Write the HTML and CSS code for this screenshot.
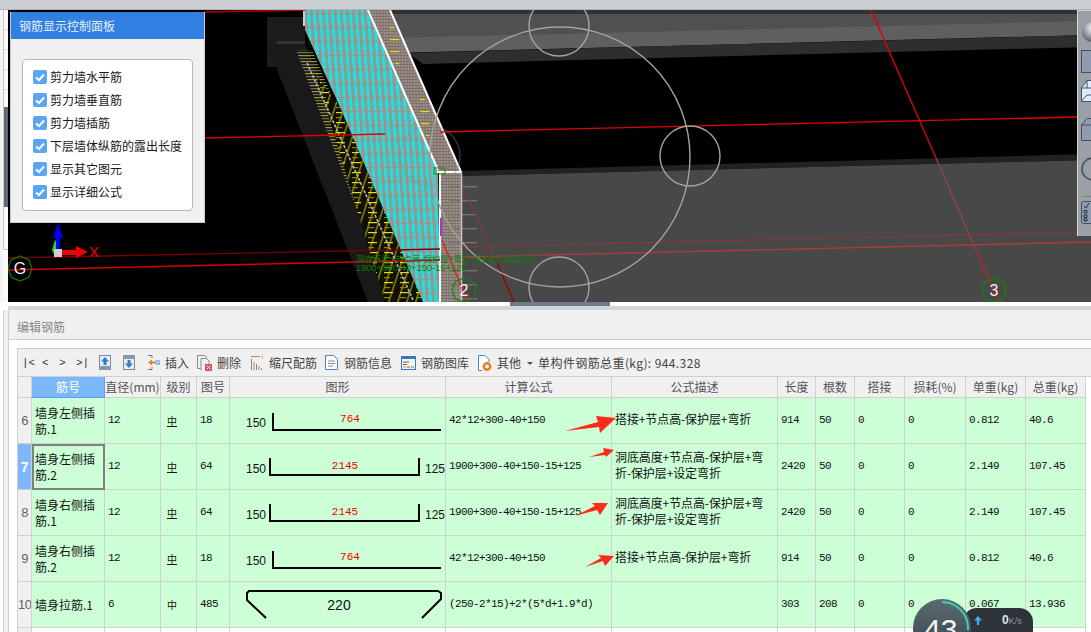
FILE: index.html
```html
<!DOCTYPE html>
<html lang="zh-CN">
<head>
<meta charset="utf-8">
<title>钢筋显示控制面板</title>
<link rel="stylesheet" href="styles.css">
</head>
<body>
<div class="app">
  <div class="topbar"></div>

  <div class="work">
    <div class="gutter">
      <div class="gutter-rows"><i></i><i></i><i></i><i></i></div>
      <div class="gutter-handle"></div>
    </div>

    <div class="viewport">
      <svg class="scene" viewBox="8 10 1083 292" width="1083" height="292">
        <defs>
          <pattern id="cyanwall" width="6" height="14" patternUnits="userSpaceOnUse" patternTransform="skewX(4)">
            <rect width="6" height="14" fill="#a09088"/>
            <rect x="0" width="3" height="13" fill="#22e0e0"/>
            <rect x="4.400" y="2" width="1" height="6" fill="#45c4c4"/>
          </pattern>
          <pattern id="brown" width="3" height="3" patternUnits="userSpaceOnUse">
            <rect width="3" height="3" fill="#8d8079"/>
            <rect x="0" width="1" height="3" fill="#a0938b"/>
            <rect y="1" width="3" height="1" fill="#7b706a"/>
          </pattern>
          <pattern id="ticks" width="24" height="6" patternUnits="userSpaceOnUse">
            <rect y="1" width="24" height="1.200" fill="#a59a1e"/>
            <rect y="4" width="24" height="1.200" fill="#6f6f64"/>
          </pattern>
          <pattern id="yticks" width="16" height="10" patternUnits="userSpaceOnUse">
            <rect y="2" width="9" height="1.200" fill="#e8de00"/>
            <rect y="7" width="6" height="1.200" fill="#8f8800"/>
          </pattern>
          <pattern id="sparse" width="30" height="12" patternUnits="userSpaceOnUse">
            <rect y="3" width="9" height="1.200" fill="#e8de00"/>
          </pattern>
          <pattern id="olive" width="9" height="20" patternUnits="userSpaceOnUse" patternTransform="skewX(-18)">
            <rect width="1.600" height="20" fill="#8a8200"/>
          </pattern>
          <pattern id="greyticks" width="15" height="14" patternUnits="userSpaceOnUse">
            <rect y="4" width="15" height="1.400" fill="#77726e"/>
          </pattern>
        </defs>

        <rect x="8" y="10" width="1083" height="292" fill="#000"/>

        <polygon points="390,10 1091,10 1091,20 390,14" fill="#333"/>
        <polygon points="390,14 1091,14 1091,25 390,39" fill="#505050"/>
        <polygon points="390,38 1091,21 1091,35 390,53" fill="#5f5f5f"/>
        <polygon points="408,53 1091,35 1091,47 423,64" fill="#2e2e2e"/>
        <polygon points="462,171 1091,154 1091,160 462,176" fill="#222"/>
        <polygon points="462,176 1091,160 1091,302 462,302" fill="#484848"/>

        <rect x="267" y="17" width="38" height="50" fill="#1c1c1c"/>
        <rect x="277" y="41" width="28" height="26" fill="#333"/>
        <polygon points="267,44 305,44 423,302 368,302" fill="#191919"/>
        <polygon points="296,50 312,50 420,302 392,302" fill="url(#ticks)"/>

        <polygon points="316,75 340,107 423,302 385,302" fill="#101006"/>
        <polygon points="316,75 340,107 423,302 385,302" fill="url(#olive)"/>
        <polygon points="316,75 340,107 423,302 385,302" fill="url(#yticks)"/>
        <line x1="307" y1="63" x2="413" y2="300" stroke="#b8b4ae" stroke-width="1.600" stroke-dasharray="3 1.500"/>

        <polygon points="305,10 368,10 438,170 440,302 423,302 340,107 305,30" fill="url(#cyanwall)"/>
        <polygon points="368,10 390,10 460,172 438,172" fill="url(#brown)"/>
        <polygon points="376,18 390,18 446,150 432,150" fill="url(#sparse)"/>
        <rect x="440" y="172" width="22" height="130" fill="url(#brown)"/>
        <rect x="450" y="176" width="27" height="126" fill="url(#greyticks)"/>

        <line x1="304" y1="10" x2="304" y2="26" stroke="#fff" stroke-width="1.600"/>
        <line x1="368" y1="10" x2="438" y2="170" stroke="#fff" stroke-width="2"/>
        <line x1="390" y1="10" x2="461" y2="172" stroke="#fff" stroke-width="2"/>
        <line x1="437" y1="172" x2="462" y2="172" stroke="#fff" stroke-width="2"/>
        <line x1="440" y1="172" x2="440" y2="302" stroke="#e8ffff" stroke-width="2"/>
        <line x1="461.500" y1="172" x2="461.500" y2="302" stroke="#c9c6c2" stroke-width="1.500"/>

        <g fill="none" stroke-width="1.400">
          <line x1="205" y1="12" x2="305" y2="10" stroke="#b00000"/>
          <line x1="205" y1="138" x2="385" y2="134" stroke="#e00000"/>
          <line x1="440" y1="132" x2="1077" y2="117" stroke="#e60000"/>
          <line x1="8" y1="258" x2="440" y2="249" stroke="#7a0000"/>
          <line x1="8" y1="270" x2="440" y2="260" stroke="#d80000"/>
          <line x1="462" y1="247" x2="1091" y2="232" stroke="#7c3c3c"/>
          <line x1="462" y1="257" x2="1091" y2="242" stroke="#b03a3a"/>
          <line x1="871" y1="10" x2="936" y2="158" stroke="#e00000"/>
          <line x1="936" y1="158" x2="976" y2="250" stroke="#8a4545"/>
          <line x1="976" y1="250" x2="999" y2="302" stroke="#c82020"/>
          <line x1="463" y1="187" x2="495" y2="258" stroke="#7c3c3c"/>
          <line x1="495" y1="258" x2="514" y2="302" stroke="#a00000"/>
          <line x1="442" y1="240" x2="468" y2="302" stroke="#e02020"/>
        </g>

        <g fill="none" stroke="#a3a3a3" stroke-width="1.400">
          <circle cx="560" cy="157" r="130"/>
          <circle cx="559" cy="26" r="30"/>
          <circle cx="559" cy="287" r="30"/>
          <circle cx="690" cy="156" r="30"/>
          <circle cx="430" cy="156" r="30" stroke="#8d8986" stroke-opacity="0.400"/>
        </g>

        <rect x="440" y="218" width="2" height="18" fill="#b030c0"/>

        <text class="scene-cad" x="356" y="262">洞底高度+节点高-保护层+弯折-保护层+设定弯折</text>
        <text class="scene-cad-num" x="356" y="271">1900+300-40+150-15+125</text>
        <rect x="434" y="168" width="11" height="6" fill="none" stroke="#1a8a1a"/>

        <polygon points="20,256 29,260 32,268 29,277 20,281 11,277 8,268 11,260" fill="none" stroke="#0a7a0a" stroke-width="1.200"/>
        <polygon points="464,278 473,282 476,290 473,299 464,302 455,299 452,290 455,282" fill="none" stroke="#0a8a0a" stroke-width="1.200"/>
        <polygon points="994,278 1003,282 1006,290 1003,299 994,302 985,299 982,290 985,282" fill="none" stroke="#0a8a0a" stroke-width="1.200"/>
        <text class="scene-mark" x="20" y="274">G</text>
        <text class="scene-mark" x="464" y="296">2</text>
        <text class="scene-mark" x="994" y="296">3</text>

        <polygon points="52,250 55,240 59,244 60,254 54,254" fill="#18e018"/>
        <rect x="56" y="234" width="4" height="16" fill="#0000f0"/>
        <polygon points="58,223 63,238 53,238" fill="#0000f0"/>
        <rect x="62" y="250" width="16" height="5" fill="#f00000"/>
        <polygon points="88,252 76,246 76,258" fill="#f00000"/>
        <rect x="54" y="249" width="8" height="8" fill="#d0d0d0"/>
        <text class="scene-x" x="89" y="257">X</text>
      </svg>

      <section class="rebar-panel">
        <h2 class="rebar-title">钢筋显示控制面板</h2>
        <div class="rebar-body">
          <ul class="rebar-options">
            <li><span class="check"><svg viewBox="0 0 14 14" width="14" height="14"><path d="M3 7.500 6 10 11 4.500" fill="none" stroke="#fff" stroke-width="2"/></svg></span>剪力墙水平筋</li>
            <li><span class="check"><svg viewBox="0 0 14 14" width="14" height="14"><path d="M3 7.500 6 10 11 4.500" fill="none" stroke="#fff" stroke-width="2"/></svg></span>剪力墙垂直筋</li>
            <li><span class="check"><svg viewBox="0 0 14 14" width="14" height="14"><path d="M3 7.500 6 10 11 4.500" fill="none" stroke="#fff" stroke-width="2"/></svg></span>剪力墙插筋</li>
            <li><span class="check"><svg viewBox="0 0 14 14" width="14" height="14"><path d="M3 7.500 6 10 11 4.500" fill="none" stroke="#fff" stroke-width="2"/></svg></span>下层墙体纵筋的露出长度</li>
            <li><span class="check"><svg viewBox="0 0 14 14" width="14" height="14"><path d="M3 7.500 6 10 11 4.500" fill="none" stroke="#fff" stroke-width="2"/></svg></span>显示其它图元</li>
            <li><span class="check"><svg viewBox="0 0 14 14" width="14" height="14"><path d="M3 7.500 6 10 11 4.500" fill="none" stroke="#fff" stroke-width="2"/></svg></span>显示详细公式</li>
          </ul>
        </div>
      </section>

      <aside class="view-tools">
        <svg viewBox="1077 10 14 226" width="14" height="226">
          <defs>
            <radialGradient id="ball" cx="0.550" cy="0.300" r="0.700"><stop offset="0" stop-color="#fff"/><stop offset="1" stop-color="#59626e"/></radialGradient>
          </defs>
          <circle cx="1092" cy="32" r="10" fill="url(#ball)"/>
          <rect x="1081.500" y="50.500" width="20" height="22" fill="#8e9bb0" stroke="#46505f"/>
          <path d="M1081.500 88 1087 80.500H1100V101.500H1081.500Z" fill="#dcecff" stroke="#46505f"/>
          <path d="M1081.500 88H1100M1087 80.500V88M1081.500 101 1087 95H1100" fill="none" stroke="#46505f"/>
          <path d="M1081.500 125 1087 118.500H1100V140.500H1081.500Z" fill="#8e9bb0" stroke="#46505f"/>
          <path d="M1081.500 125H1100" stroke="#46505f" fill="none"/>
          <circle cx="1093" cy="169" r="11" fill="none" stroke="#46505f" stroke-width="1.600"/>
          <line x1="1082" y1="196.500" x2="1091" y2="196.500" stroke="#7c7f84"/>
          <rect x="1081.500" y="201.500" width="20" height="22" rx="2" fill="#8e9bb0" stroke="#46505f"/>
          <path d="M1084 206 1086 208 1089 203M1084 210.500H1087V213H1084ZM1084 215H1087V217.500H1084ZM1084 219H1087V221H1084Z" fill="none" stroke="#2b3340"/>
        </svg>
      </aside>
    </div>
  </div>

  <div class="splitter"><span class="splitter-handle"></span></div>
  <div class="splitter-bar"></div>

  <div class="editor">
    <div class="editor-rail"></div>
    <div class="editor-main">
      <h3 class="editor-title">编辑钢筋</h3>
      <div class="editor-body">
        <div class="grid-wrap">
          <div class="toolbar">
            <div class="nav"><span>|&lt;</span><span>&lt;</span><span>&gt;</span><span>&gt;|</span></div>
            <div class="moves">
              <svg viewBox="0 0 12 15" width="12" height="15"><rect x="0.500" y="0.500" width="11" height="14" fill="#e8eef5" stroke="#7d8894"/><rect y="11" width="12" height="4" fill="#8a97a5"/><path d="M6 2 10 6.500H7.500V10h-3V6.500H2Z" fill="#2f7fd0"/></svg>
              <svg viewBox="0 0 12 15" width="12" height="15"><rect x="0.500" y="0.500" width="11" height="14" fill="#e8eef5" stroke="#7d8894"/><rect width="12" height="4" fill="#8a97a5"/><path d="M6 13 10 8.500H7.500V5h-3V8.500H2Z" fill="#2f7fd0"/></svg>
            </div>
            <div class="tool tool-insert"><svg viewBox="0 0 13 15" width="13" height="15"><path d="M1 .5H5M5 .5V3M1 14.500H5M5 14.500V12" fill="none" stroke="#777"/><path d="M1 7.500 5 4.500V6.500H8V8.500H5V10.500Z" fill="#f07a1c"/><rect x="9" y="6" width="4" height="3" fill="none" stroke="#3f8fd8"/></svg>插入</div>
            <div class="tool tool-delete"><svg viewBox="0 0 15 16" width="15" height="16"><path d="M3.500 13.500H.5V.5H8L10 3M4 15.500V3.500H9.500L12 6V9" fill="none" stroke="#8c8c8c"/><rect x="8" y="9" width="7" height="7" fill="#d85050"/><path d="M9.500 10.500 13.500 14.500M13.500 10.500 9.500 14.500" stroke="#fff"/></svg>删除</div>
            <div class="tool tool-scale"><svg viewBox="0 0 12 15" width="12" height="15"><path d="M0 1.500H9" stroke="#e07a30"/><path d="M12 0V4" stroke="#e07a30"/><path d="M.5 4V15M3 7V15M5.500 9V15M8 11V15M10.500 13V15" stroke="#8a8a8a"/></svg>缩尺配筋</div>
            <div class="tool tool-info"><svg viewBox="0 0 13 15" width="13" height="15"><path d="M.5.500H8.500L12.500 4.500V14.500H.5Z" fill="#fff" stroke="#3f86d6"/><path d="M3 6H10M3 8.500H10M3 11H8" stroke="#8a8a8a"/></svg>钢筋信息</div>
            <div class="tool tool-lib"><svg viewBox="0 0 15 14" width="15" height="14"><rect x="0.500" y="0.500" width="14" height="13" fill="#f4f4f4" stroke="#3a77c0"/><rect width="15" height="3" fill="#3a77c0"/><path d="M2 6H8M2 8.500H6" stroke="#666"/><path d="M2 11H5" stroke="#d8a030"/><path d="M6 11H9" stroke="#c04040"/><path d="M10 11H13" stroke="#40a060"/></svg>钢筋图库</div>
            <div class="tool tool-other"><svg viewBox="0 0 14 16" width="14" height="16"><path d="M4 15.500H.5V.5H7L11 4.500V7" fill="#fff" stroke="#3f86d6"/><circle cx="9" cy="11.500" r="3.200" fill="none" stroke="#ee7a1c" stroke-width="2.400"/></svg>其他</div>
            <span class="caret"></span>
            <div class="total">单构件钢筋总重(kg): 944.328</div>
          </div>

          <table class="rebar-grid">
            <colgroup>
              <col class="c0"><col class="c1"><col class="c2"><col class="c3"><col class="c4"><col class="c5"><col class="c6"><col class="c7"><col class="c8"><col class="c9"><col class="c10"><col class="c11"><col class="c12"><col class="c13">
            </colgroup>
            <thead>
              <tr>
                <th></th><th class="is-active">筋号</th><th>直径(mm)</th><th>级别</th><th>图号</th><th>图形</th><th>计算公式</th><th>公式描述</th><th>长度</th><th>根数</th><th>搭接</th><th>损耗(%)</th><th>单重(kg)</th><th>总重(kg)</th>
              </tr>
            </thead>
            <tbody>
              <tr>
                <th class="rownum">6</th>
                <td class="name">墙身左侧插<br>筋.1</td><td class="num">12</td><td><span class="grade grade-b">中</span></td><td class="num">18</td>
                <td class="shape"><svg viewBox="0 0 215 45" width="215" height="45"><text class="dim" x="16" y="29">150</text><text class="len" x="120" y="24">764</text><path d="M43 15V32H211" fill="none" stroke="#000" stroke-width="2"/></svg></td>
                <td class="num">42*12+300-40+150</td><td class="desc">搭接+节点高-保护层+弯折</td><td class="num">914</td><td class="num">50</td><td class="num">0</td><td class="num">0</td><td class="num">0.812</td><td class="num">40.6</td>
              </tr>
              <tr>
                <th class="rownum is-current">7</th>
                <td class="name is-selected">墙身左侧插<br>筋.2</td><td class="num">12</td><td><span class="grade grade-b">中</span></td><td class="num">64</td>
                <td class="shape"><svg viewBox="0 0 215 45" width="215" height="45"><text class="dim" x="16" y="29">150</text><text class="len" x="115" y="25">2145</text><text class="dim" x="195" y="29">125</text><path d="M40 14V31H189V14" fill="none" stroke="#000" stroke-width="2"/></svg></td>
                <td class="num">1900+300-40+150-15+125</td><td class="desc">洞底高度+节点高-保护层+弯<br>折-保护层+设定弯折</td><td class="num">2420</td><td class="num">50</td><td class="num">0</td><td class="num">0</td><td class="num">2.149</td><td class="num">107.45</td>
              </tr>
              <tr>
                <th class="rownum">8</th>
                <td class="name">墙身右侧插<br>筋.1</td><td class="num">12</td><td><span class="grade grade-b">中</span></td><td class="num">64</td>
                <td class="shape"><svg viewBox="0 0 215 45" width="215" height="45"><text class="dim" x="16" y="29">150</text><text class="len" x="115" y="25">2145</text><text class="dim" x="195" y="29">125</text><path d="M40 14V31H189V14" fill="none" stroke="#000" stroke-width="2"/></svg></td>
                <td class="num">1900+300-40+150-15+125</td><td class="desc">洞底高度+节点高-保护层+弯<br>折-保护层+设定弯折</td><td class="num">2420</td><td class="num">50</td><td class="num">0</td><td class="num">0</td><td class="num">2.149</td><td class="num">107.45</td>
              </tr>
              <tr>
                <th class="rownum">9</th>
                <td class="name">墙身右侧插<br>筋.2</td><td class="num">12</td><td><span class="grade grade-b">中</span></td><td class="num">18</td>
                <td class="shape"><svg viewBox="0 0 215 45" width="215" height="45"><text class="dim" x="16" y="29">150</text><text class="len" x="120" y="24">764</text><path d="M43 15V32H211" fill="none" stroke="#000" stroke-width="2"/></svg></td>
                <td class="num">42*12+300-40+150</td><td class="desc">搭接+节点高-保护层+弯折</td><td class="num">914</td><td class="num">50</td><td class="num">0</td><td class="num">0</td><td class="num">0.812</td><td class="num">40.6</td>
              </tr>
              <tr>
                <th class="rownum">10</th>
                <td class="name">墙身拉筋.1</td><td class="num">6</td><td><span class="grade">中</span></td><td class="num">485</td>
                <td class="shape"><svg viewBox="0 0 215 45" width="215" height="45"><text class="dim dim-lg" x="109" y="28">220</text><path d="M36 36 17 18V11L19 9H208L211 11V17L192 36" fill="none" stroke="#000" stroke-width="2"/></svg></td>
                <td class="num">(250-2*15)+2*(5*d+1.9*d)</td><td class="desc"></td><td class="num">303</td><td class="num">208</td><td class="num">0</td><td class="num">0</td><td class="num">0.067</td><td class="num">13.936</td>
              </tr>
              <tr class="blank">
                <th></th><td></td><td></td><td></td><td></td><td></td><td></td><td></td><td></td><td></td><td></td><td></td><td></td><td></td>
              </tr>
            </tbody>
          </table>
        </div>
      </div>
    </div>
  </div>

  <svg class="annotations" viewBox="0 0 1091 632" width="1091" height="632">
    <polygon points="565,431 598,422 596,416 616,418 600,433 599,427" fill="#ff2a18"/>
    <polygon points="589,457 604,452 603,448 614,450 606,457 605,455" fill="#ff2a18"/>
    <polygon points="575,516 595,506 592,503 608,503 600,515 597,510" fill="#ff2a18"/>
    <polygon points="585,567 601,558 598,555 614,556 605,566 603,561" fill="#ff2a18"/>
  </svg>

  <div class="net-meter">
    <div class="net-pill">
      <svg class="net-arrow" viewBox="0 0 8 9" width="8" height="9"><path d="M4 0 8 4.500H5.200V9H2.800V4.500H0Z" fill="#3ab0f0"/></svg>
      <span class="net-speed"><b>0</b>K/s</span>
    </div>
    <div class="net-dial">
      <svg class="net-ring" viewBox="0 0 58 58" width="58" height="58"><path d="M29 3A26 26 0 0 1 55 29V31" fill="none" stroke="#37d4b8" stroke-width="2"/></svg>
      <span class="net-value">43<small>%</small></span>
    </div>
  </div>
</div>
</body>
</html>
```

FILE: styles.css
```css
* { box-sizing: border-box; }

html, body {
  margin: 0;
  padding: 0;
  height: 100%;
  overflow: hidden;
  background: #fff;
}

.app {
  position: relative;
  width: 1091px;
  height: 632px;
  overflow: hidden;
  display: flex;
  flex-direction: column;
  font-family: "Noto Sans CJK SC", "Liberation Sans", sans-serif;
  font-size: 12px;
  color: #111;
}

.topbar {
  height: 10px;
  flex: none;
  background: #ccd0d4;
  border-bottom: 1px solid #aeb1b5;
}

.work {
  display: flex;
  height: 292px;
  flex: none;
}

.gutter {
  position: relative;
  width: 8px;
  flex: none;
  background: #fbfbfb;
  border-left: 3px solid #f4f4f4;
}

.gutter-rows {
  height: 240px;
  border-left: 1px solid #c9c9c9;
  border-bottom: 1px solid #c9c9c9;
  display: flex;
  flex-direction: column;
}

.gutter-rows i {
  display: block;
  height: 20px;
  flex: none;
  border-bottom: 1px solid #dadada;
}

.gutter-handle {
  position: absolute;
  left: 1px;
  top: 97px;
  width: 4px;
  height: 100px;
  background: #5f6b78;
}

.viewport {
  position: relative;
  flex: 1;
  background: #000;
  overflow: hidden;
}

.scene {
  display: block;
}

.scene-cad {
  font-family: "Noto Sans CJK SC", sans-serif;
  font-size: 8.500px;
  fill: #0b7d0b;
}

.scene-cad-num {
  font-family: "Liberation Sans", sans-serif;
  font-size: 9.300px;
  fill: #0b7d0b;
}

.scene-mark {
  font-family: "Liberation Sans", sans-serif;
  font-size: 16px;
  fill: #eee;
  text-anchor: middle;
}

.scene-x {
  font-family: "Liberation Sans", sans-serif;
  font-size: 15px;
  fill: #f00000;
}

.rebar-panel {
  position: absolute;
  left: 2px;
  top: 2px;
  width: 195px;
  height: 211px;
  background: #f0f0f0;
  border: 1px solid #c9ccd4;
  border-top: 0;
  display: flex;
  flex-direction: column;
}

.rebar-title {
  margin: 0;
  height: 27px;
  flex: none;
  padding-left: 8px;
  background: #2f80e0;
  color: #e6eefa;
  font-size: 12px;
  font-weight: 400;
  line-height: 27px;
}

.rebar-body {
  flex: 1;
  padding: 20px 11px 11px 11px;
  display: flex;
}

.rebar-options {
  flex: 1;
  height: 152px;
  margin: 0;
  padding: 0 0 2px 10px;
  list-style: none;
  background: #fff;
  border: 1px solid #b8b8b8;
  border-radius: 4px;
  display: flex;
  flex-direction: column;
  justify-content: center;
}

.rebar-options li {
  display: flex;
  align-items: center;
  gap: 3px;
  height: 23px;
  white-space: nowrap;
  color: #1a1a1a;
}

.check {
  width: 14px;
  height: 14px;
  flex: none;
  border-radius: 2px;
  background: #5ba5f5;
}

.check svg {
  display: block;
}

.view-tools {
  position: absolute;
  right: 0;
  top: 0;
  width: 14px;
  height: 226px;
  background: #9ba0a6;
  border-top: 1px solid #cfd2d5;
  border-left: 1px solid #d6d8da;
  overflow: hidden;
}

.view-tools svg {
  display: block;
  margin: -1px 0 0 -1px;
}

.splitter {
  height: 4px;
  flex: none;
  background: #fff;
  display: flex;
  justify-content: center;
  padding-left: 29px;
}

.splitter-handle {
  width: 100px;
  height: 4px;
  background: #6d7a8a;
}

.splitter-bar {
  height: 4px;
  flex: none;
  margin-left: 8px;
  background: #d3d5da;
}

.editor {
  flex: 1;
  display: flex;
  min-height: 0;
}

.editor-rail {
  width: 9px;
  flex: none;
  background: #f0f0f0;
  border-left: 3px solid #fff;
  box-shadow: inset 1px 0 #d0d0d0;
}

.editor-main {
  flex: 1;
  min-width: 0;
  display: flex;
  flex-direction: column;
  border-left: 1px solid #cfcfcf;
  margin-left: -1px;
}

.editor-title {
  margin: 0;
  height: 30px;
  flex: none;
  padding-left: 8px;
  background: #f0f0f0;
  border-bottom: 1px solid #cfcfcf;
  color: #888;
  font-size: 12px;
  font-weight: 400;
  line-height: 34px;
}

.editor-body {
  flex: 1;
  min-height: 0;
  padding: 8px 0 0 8px;
  background: #fff;
}

.grid-wrap {
  border-top: 1px solid #cfcfcf;
  border-left: 1px solid #d0d0d0;
}

.toolbar {
  height: 28px;
  display: flex;
  align-items: center;
  padding-left: 4px;
  background: #f0f0f0;
  border-bottom: 1px solid #d0d0d0;
  color: #444;
  white-space: nowrap;
}

.nav {
  display: flex;
  width: 72px;
  font-family: "Liberation Mono", monospace;
  font-size: 11px;
  color: #333;
  flex: none;
}

.nav span:nth-child(1) { width: 20px; }
.nav span:nth-child(2) { width: 17px; }
.nav span:nth-child(3) { width: 17px; }

.moves {
  display: flex;
  gap: 12px;
  margin-left: 5px;
  margin-right: 12px;
}

.moves svg {
  display: block;
}

.tool {
  display: flex;
  align-items: center;
  gap: 5px;
  margin-right: 9px;
}

.tool svg {
  display: block;
  flex: none;
}

.tool-insert { margin-right: 8px; }
.tool-delete { margin-right: 10px; }
.tool-scale { gap: 6px; margin-right: 8px; }
.tool-info { gap: 6px; margin-right: 9px; }

.caret {
  width: 0;
  height: 0;
  margin: 1px 5px 0 -3px;
  border-left: 3px solid transparent;
  border-right: 3px solid transparent;
  border-top: 3px solid #555;
}

.total {
  color: #444;
  letter-spacing: 0.400px;
}

.rebar-grid {
  table-layout: fixed;
  width: 1068px;
  border-collapse: separate;
  border-spacing: 0;
}

.c0 { width: 14px; }
.c1 { width: 73px; }
.c2 { width: 56px; }
.c3 { width: 36px; }
.c4 { width: 33px; }
.c5 { width: 216px; }
.c6 { width: 166px; }
.c7 { width: 166px; }
.c8 { width: 38px; }
.c9 { width: 39px; }
.c10 { width: 50px; }
.c11 { width: 61px; }
.c12 { width: 60px; }
.c13 { width: 60px; }

.rebar-grid th,
.rebar-grid td {
  padding: 0;
  border-right: 1px solid #d0d0d0;
  border-bottom: 1px solid #d0d0d0;
  overflow: hidden;
  white-space: nowrap;
}

.rebar-grid thead th {
  height: 21px;
  background: #f0f0f0;
  color: #555;
  font-weight: 400;
  font-size: 12px;
  line-height: 16px;
  text-align: center;
}

.rebar-grid thead th.is-active {
  background: #7cb8fb;
  border-right: 1px solid #5aa0f0;
  border-bottom: 1px solid #5aa0f0;
  color: #fff;
}

.rebar-grid tbody tr {
  height: 46px;
}

.rebar-grid tbody td {
  background: #ccffd6;
  vertical-align: middle;
  padding: 0 3px 4px;
  line-height: 16px;
}

.rebar-grid .rownum {
  background: #f0f0f0;
  color: #5a6470;
  font-family: "Liberation Sans", sans-serif;
  font-size: 13px;
  font-weight: 400;
  text-align: center;
  letter-spacing: -0.500px;
}

.rebar-grid .rownum.is-current {
  background: #7cb8fb;
  color: #fff;
  font-weight: 700;
  font-size: 14px;
}

.rebar-grid td.name {
  padding-bottom: 0;
  color: #111;
}

.rebar-grid td.is-selected {
  border: 2px solid #808080;
  padding: 0 1px 0 1px;
}

.rebar-grid td.num {
  padding-bottom: 2px;
  font-family: "Liberation Mono", "Noto Sans CJK SC", monospace;
  font-size: 11px;
  letter-spacing: -0.600px;
  color: #111;
}

.rebar-grid td.desc {
  color: #111;
  letter-spacing: -0.100px;
}

.rebar-grid td.shape {
  padding: 0;
}

.rebar-grid td.shape svg {
  display: block;
}

.grade {
  display: inline-block;
  margin-left: 3px;
  margin-top: 5px;
  font-size: 10px;
  line-height: 11px;
}

.grade-b {
  border-bottom: 1px solid #111;
}

.dim {
  font-family: "Liberation Sans", sans-serif;
  font-size: 12px;
  fill: #111;
}

.dim-lg {
  font-size: 14px;
  text-anchor: middle;
}

.len {
  font-family: "Liberation Mono", monospace;
  font-size: 11px;
  fill: #ee0000;
  text-anchor: middle;
}

.rebar-grid .blank td {
  background: #fff;
}

.rebar-grid .blank th {
  background: #f0f0f0;
}

.annotations {
  position: absolute;
  left: 0;
  top: 0;
  pointer-events: none;
}

.net-meter {
  position: absolute;
  left: 913px;
  top: 599px;
  width: 122px;
  height: 33px;
}

.net-dial {
  position: absolute;
  left: 0;
  top: 0;
  width: 58px;
  height: 58px;
  border-radius: 50%;
  background: linear-gradient(#5c6b72, #35404a);
  text-align: center;
}

.net-ring {
  position: absolute;
  left: 0;
  top: 0;
}

.net-value {
  position: absolute;
  left: 11px;
  top: 14px;
  color: #f4f6f6;
  font-family: "Liberation Sans", sans-serif;
  font-size: 30px;
  line-height: 34px;
  font-weight: 400;
}

.net-value small {
  font-size: 8px;
}

.net-pill {
  position: absolute;
  left: 50px;
  top: 9px;
  width: 70px;
  height: 24px;
  padding: 0 0 0 11px;
  background: #2d3338;
  border-radius: 14px 14px 0 0;
  display: flex;
  align-items: center;
  color: #8d9aa3;
  font-family: "Liberation Sans", sans-serif;
  font-size: 9px;
}

.net-arrow {
  display: block;
  flex: none;
  margin-right: 20px;
}

.net-speed b {
  color: #dfe5e8;
  font-size: 12px;
}
```
